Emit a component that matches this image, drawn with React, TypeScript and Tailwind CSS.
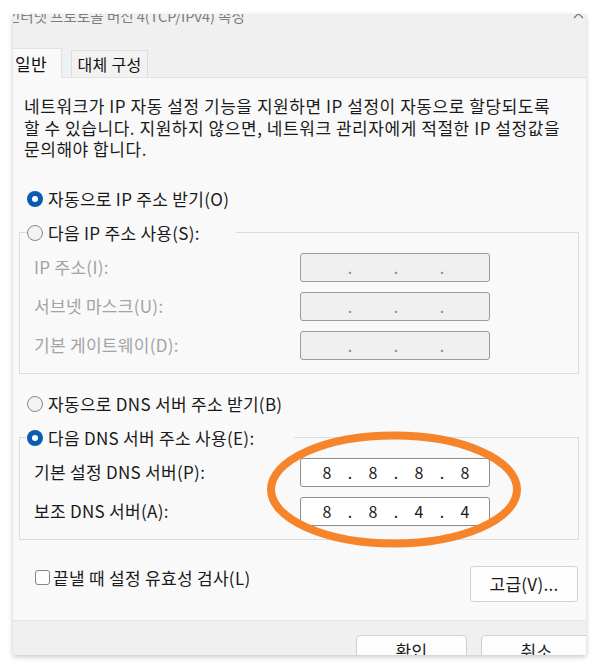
import React, { Fragment } from "react";

function Radio({ checked }: { checked?: boolean }) {
  return checked ? (
    <span className="w-[16px] h-[16px] rounded-full bg-[#0a5cb3] flex items-center justify-center shrink-0">
      <span className="w-[6px] h-[6px] rounded-full bg-white" />
    </span>
  ) : (
    <span className="w-[16px] h-[16px] rounded-full border border-[#878787] bg-[#f3f3f3] shrink-0" />
  );
}

function IpBox({ values, disabled }: { values: string[]; disabled?: boolean }) {
  return (
    <div
      className={
        disabled
          ? "w-[190px] h-[29px] rounded-[3px] border border-[#9a9a9a] bg-[#f0f0f0] flex items-center pl-[7px] text-[16px] tracking-normal leading-none text-[#8a8a8a]"
          : "w-[190px] h-[29px] rounded-[3px] border border-[#8c8c8c] bg-white flex items-center pl-[7px] text-[16px] tracking-normal leading-none text-[#1a1a1a]"
      }
    >
      {values.map((v, i) => (
        <Fragment key={i}>
          {i > 0 && <span className="w-[8px] text-center">.</span>}
          <span className="w-[38px] text-center">{v}</span>
        </Fragment>
      ))}
    </div>
  );
}

function Row({ label, values, disabled }: { label: string; values: string[]; disabled?: boolean }) {
  return (
    <div className="flex items-center h-[29px]">
      <span className={disabled ? "w-[266px] text-[#a3a3a3]" : "w-[266px] text-[#1a1a1a]"}>{label}</span>
      <IpBox values={values} disabled={disabled} />
    </div>
  );
}

export default function App() {
  return (
    <div className="relative w-[600px] h-[670px] bg-white overflow-hidden font-['Noto_Sans_CJK_KR','Noto_Sans',sans-serif] text-[17px] tracking-[0.3px] text-[#1a1a1a]">
      <div className="pt-[14px] pl-[13px]">
        <div className="w-[573px] h-[641px] bg-[#f0f0f0] overflow-hidden flex flex-col shadow-[0_2px_5px_rgba(0,0,0,0.22)]">
          {/* title row */}
          <div className="h-[22px] overflow-hidden flex justify-between shrink-0">
            <span className="-mt-[10px] -ml-[6px] text-[14.5px] tracking-normal leading-[24px] text-[#7d7d7d] whitespace-nowrap">
              인터넷 프로토콜 버전 4(TCP/IPv4) 속성
            </span>
            <svg className="-mt-[6px] mr-[2px]" width="11" height="11" viewBox="0 0 11 11">
              <path d="M1 1 L10 10 M10 1 L1 10" stroke="#777" strokeWidth="1.3" />
            </svg>
          </div>
          {/* tabs */}
          <div className="h-[41px] flex items-end shrink-0">
            <div className="relative z-10 -mb-px w-[49px] h-[30px] bg-[#f9f9f9] border-r border-t border-[#e2e2e2] flex items-center pl-[2px] text-[#111]">
              일반
            </div>
            <div className="ml-[9px] w-[77px] h-[27px] bg-[#f2f2f2] border border-b-0 border-[#dedede] flex items-center justify-center text-[16px] text-[#111]">
              대체 구성
            </div>
          </div>
          {/* panel */}
          <div className="h-[544px] shrink-0 bg-[#f9f9f9] border-t border-b border-[#e3e3e3] flex flex-col">
            <p className="mt-[17px] ml-[11px] leading-[21.5px] tracking-[0.55px] text-[#1b1b1b] whitespace-nowrap">
              네트워크가 IP 자동 설정 기능을 지원하면 IP 설정이 자동으로 할당되도록
              <br />
              할 수 있습니다. 지원하지 않으면, 네트워크 관리자에게 적절한 IP 설정값을
              <br />
              문의해야 합니다.
            </p>
            <div className="mt-[28px] ml-[14px] h-[22px] flex items-center gap-[5px]">
              <Radio checked />
              <span>자동으로 IP 주소 받기(O)</span>
            </div>
            <fieldset className="mt-[12px] ml-[6px] mr-[7px] border border-[#dcdcdc] pt-[9px] pb-[13px]">
              <legend className="ml-[7px] pr-[36px]">
                <span className="h-[22px] flex items-center gap-[5px]">
                  <Radio />
                  <span>다음 IP 주소 사용(S):</span>
                </span>
              </legend>
              <div className="flex flex-col gap-[10px] pl-[14px]">
                <Row label="IP 주소(I):" values={["", "", "", ""]} disabled />
                <Row label="서브넷 마스크(U):" values={["", "", "", ""]} disabled />
                <Row label="기본 게이트웨이(D):" values={["", "", "", ""]} disabled />
              </div>
            </fieldset>
            <div className="mt-[19px] ml-[14px] h-[22px] flex items-center gap-[5px]">
              <Radio />
              <span>자동으로 DNS 서버 주소 받기(B)</span>
            </div>
            <fieldset className="mt-[12px] ml-[6px] mr-[7px] border border-[#dcdcdc] pt-[9px] pb-[13px]">
              <legend className="ml-[7px] pr-[40px]">
                <span className="h-[22px] flex items-center gap-[5px]">
                  <Radio checked />
                  <span>다음 DNS 서버 주소 사용(E):</span>
                </span>
              </legend>
              <div className="flex flex-col gap-[10px] pl-[14px]">
                <Row label="기본 설정 DNS 서버(P):" values={["8", "8", "8", "8"]} />
                <Row label="보조 DNS 서버(A):" values={["8", "8", "4", "4"]} />
              </div>
            </fieldset>
            <div className="mt-[26px] ml-[22px] mr-[8px] flex justify-between items-start">
              <div className="mt-[1px] h-[22px] flex items-center gap-[3px]">
                <span className="w-[15px] h-[15px] rounded-[3px] border border-[#858585] bg-white" />
                <span>끝낼 때 설정 유효성 검사(L)</span>
              </div>
              <div className="w-[108px] h-[36px] rounded-[4px] border border-[#d0d0d0] bg-[#fdfdfd] flex items-center justify-center">
                고급(V)...
              </div>
            </div>
          </div>
          {/* footer */}
          <div className="h-[34px] shrink-0 pl-[343px] pt-[14px] flex gap-[14px] overflow-hidden">
            <div className="w-[111px] h-[32px] shrink-0 rounded-[4px] border border-[#d0d0d0] bg-[#fdfdfd] flex items-center justify-center">
              확인
            </div>
            <div className="w-[111px] h-[32px] shrink-0 rounded-[4px] border border-[#d0d0d0] bg-[#fdfdfd] flex items-center justify-center">
              취소
            </div>
          </div>
        </div>
      </div>
      <svg className="absolute left-0 top-0 pointer-events-none" width="600" height="670" viewBox="0 0 600 670">
        <ellipse cx="394" cy="489.5" rx="123" ry="54" fill="none" stroke="#f6842a" strokeWidth="8" />
      </svg>
    </div>
  );
}
